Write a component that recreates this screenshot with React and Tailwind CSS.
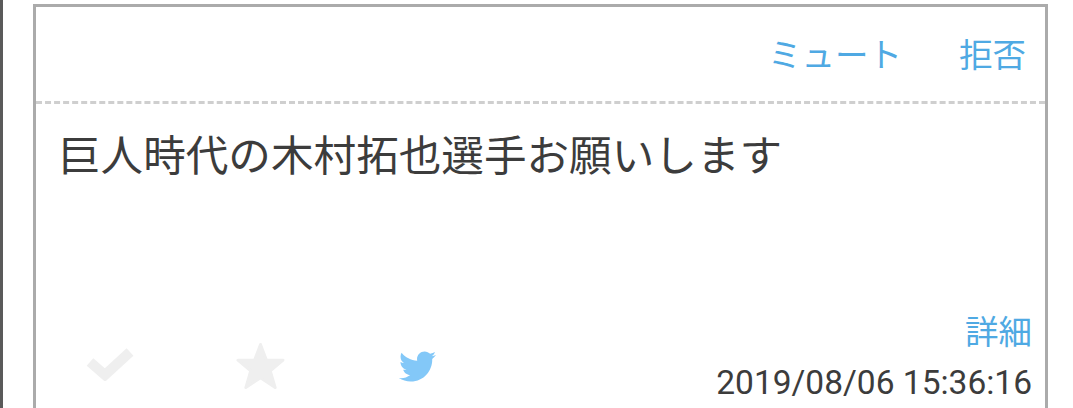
import React from "react";
import { FaTwitter } from "react-icons/fa";

const font = "font-['Roboto','Noto_Sans_CJK_JP',sans-serif]";

export default function App() {
  return (
    <div className={`h-[408px] w-[1073px] overflow-hidden bg-white flex ${font}`}>
      <div className="w-[3px] h-full bg-[#5a5a5a] shrink-0" />
      <div className="ml-[30px] mt-[4px] w-[1015px] h-[420px] border-[3px] border-[#ababab] flex flex-col shrink-0">
        <div className="h-[97px] flex items-start justify-end pr-[19px] pt-[26px] gap-[57px] text-[33.5px] leading-[46px] text-[#4fa9e3] border-b-[3px] border-dashed border-[#cfcfcf]">
          <span>ミュート</span>
          <span>拒否</span>
        </div>
        <div className="h-[207px] px-[22px] pt-[24px] text-[42.6px] leading-[56px] text-[#3c3c3c]">
          巨人時代の木村拓也選手お願いします
        </div>
        <div className="flex justify-between pr-[13px]">
          <div className="flex items-start pt-[36px] pl-[50px]">
            <svg viewBox="0 0 48 34" className="w-[48px] h-[34px]">
              <path d="M4 15 L19 28 L44 5" fill="none" stroke="#efefef" strokeWidth="10" />
            </svg>
            <svg viewBox="0 0 50 48" className="ml-[102px] w-[49px] h-[48px] -mt-[5px]">
              <path
                d="M25 2 L31 18 L48 18 L35 29 L40 46 L25 36 L10 46 L15 29 L2 18 L19 18 Z"
                fill="#efefef"
                stroke="#efefef"
                strokeWidth="3"
                strokeLinejoin="round"
              />
            </svg>
            <FaTwitter className="ml-[114px] text-[#83c8f8] text-[37px] mt-[1px]" />
          </div>
          <div className="flex flex-col items-end">
            <span className="text-[33.5px] leading-[44px] text-[#4fa9e3]">詳細</span>
            <span className="text-[33.5px] leading-[44px] mt-[6px] text-[#3c3c3c]">2019/08/06 15:36:16</span>
          </div>
        </div>
      </div>
    </div>
  );
}
